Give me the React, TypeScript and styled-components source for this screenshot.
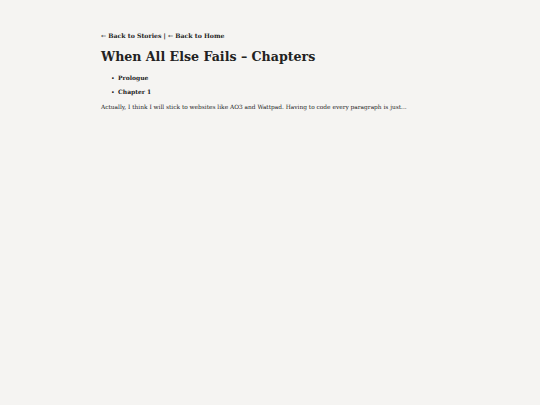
import React from "react";
import styled, { createGlobalStyle } from "styled-components";

const Global = createGlobalStyle`
  html, body { margin: 0; padding: 0; background: #f5f4f2; }
  body { font-family: Georgia, "DejaVu Serif", serif; color: #222; }
`;

const Page = styled.main`
  max-width: 338px;
  margin: 0 auto;
  padding-top: 31px;
`;

const Nav = styled.nav`
  font-size: 6.2px;
  font-weight: bold;
  line-height: 10px;
  color: #222;
`;

const NavLink = styled.a`
  color: #222;
  text-decoration: none;
`;

const Title = styled.h1`
  font-size: 12.6px;
  font-weight: bold;
  line-height: 20px;
  margin: 6px 0 4px;
`;

const List = styled.ul`
  margin: 0;
  padding-left: 17px;
  font-size: 6px;
  font-weight: bold;
`;

const Item = styled.li`
  line-height: 14px;
  &::marker {
    font-size: 5px;
    content: "•  ";
  }
`;

const Para = styled.p`
  margin: 3px 0 0;
  font-size: 5.85px;
  line-height: 10px;
`;

export default function App() {
  return (
    <>
      <Global />
      <Page>
        <Nav>
          <NavLink href="#">← Back to Stories</NavLink> | <NavLink href="#">← Back to Home</NavLink>
        </Nav>
        <Title>When All Else Fails – Chapters</Title>
        <List>
          <Item>Prologue</Item>
          <Item>Chapter 1</Item>
        </List>
        <Para>Actually, I think I will stick to websites like AO3 and Wattpad. Having to code every paragraph is just...</Para>
      </Page>
    </>
  );
}
